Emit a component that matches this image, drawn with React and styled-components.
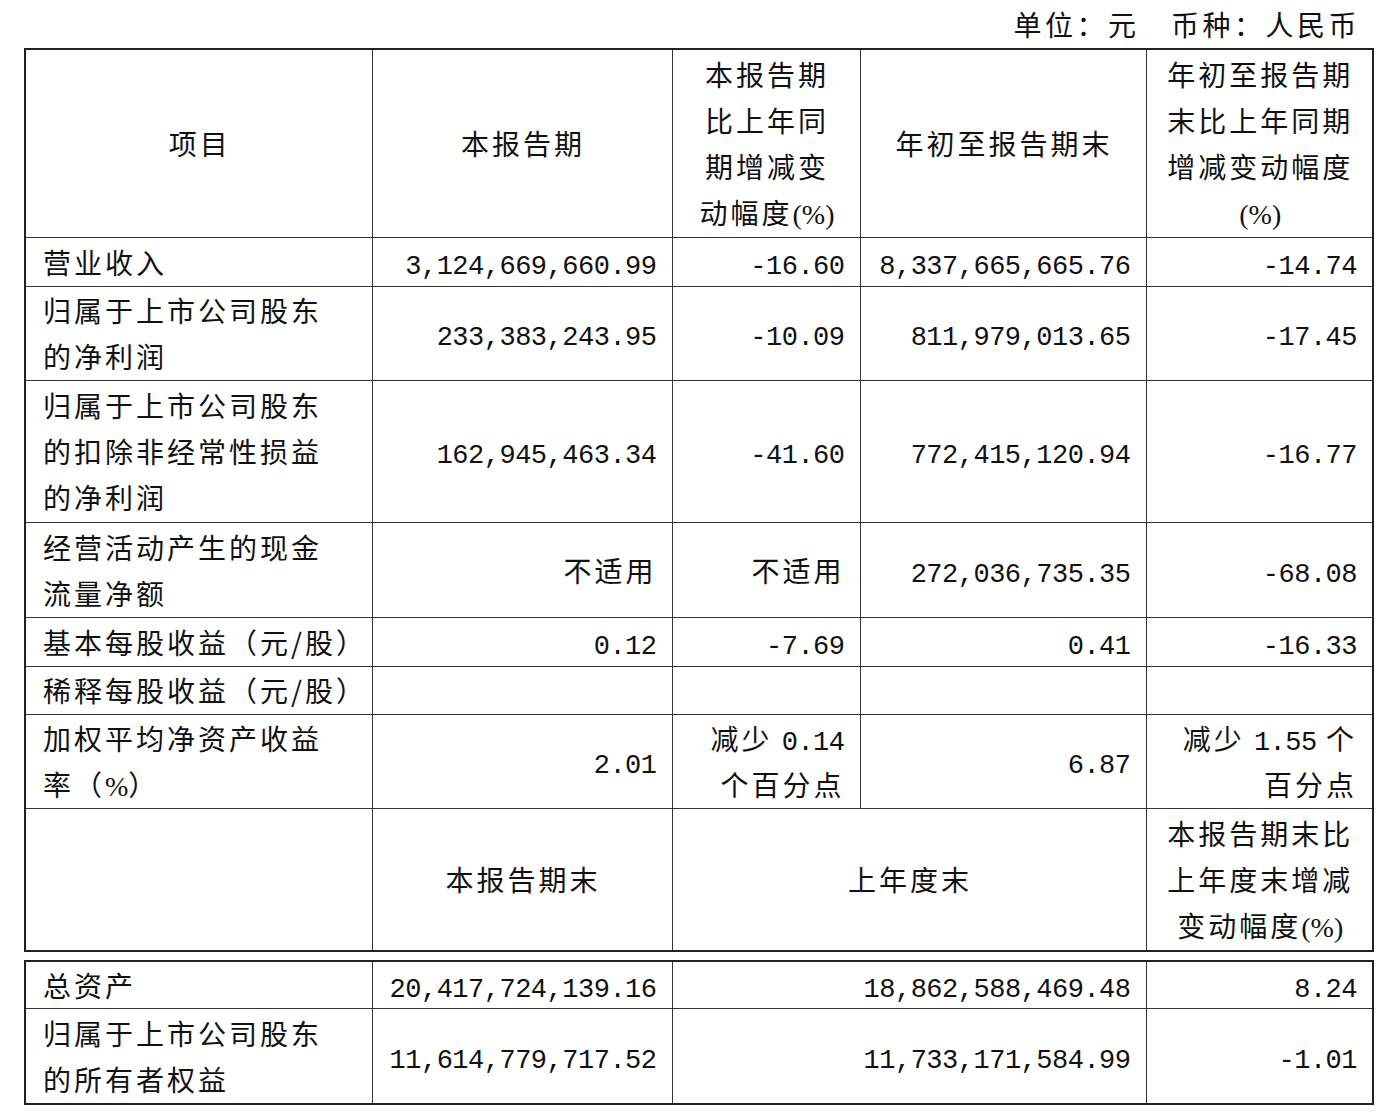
import React from 'react';
import styled, { createGlobalStyle } from 'styled-components';

const GlobalStyle = createGlobalStyle`
  html, body {
    margin: 0;
    padding: 0;
    background: #fff;
  }
  body {
    font-family: "Noto Sans CJK SC", "Liberation Serif", serif;
    color: #111;
  }
`;

const Page = styled.div`
  width: 1348px;
  padding: 0 10px 0 24px;
`;

const UnitLine = styled.div`
  height: 48px;
  line-height: 48px;
  text-align: right;
  padding-right: 12px;
  font-size: 28px;
  letter-spacing: 3.5px;
  white-space: pre;
`;

const Table = styled.table`
  width: 1348px;
  table-layout: fixed;
  border-collapse: collapse;
  border: 2px solid #222;
  margin-top: ${(p) => p.$gap || 0}px;
  font-size: 28px;
  letter-spacing: 3px;
`;

const Cell = styled.td`
  border: 1px solid #333;
  padding: 0 15px 0 17px;
  line-height: 46px;
  vertical-align: middle;
  text-align: ${(p) => p.$align || 'left'};
  height: ${(p) => (p.$h ? `${p.$h}px` : 'auto')};
  box-sizing: border-box;
  white-space: nowrap;
`;

const Num = styled.span`
  font-family: "Liberation Mono", monospace;
  font-size: 27px;
  line-height: 1;
  letter-spacing: -0.5px;
`;

const Pct = styled.span`
  font-family: "Liberation Serif", serif;
  line-height: 1;
  letter-spacing: 0;
`;

const cols = [347, 300, 188, 286, 227];

const Cols = () => (
  <colgroup>
    {cols.map((w, i) => (
      <col key={i} style={{ width: w }} />
    ))}
  </colgroup>
);

const Lines = ({ lines }) =>
  lines.map((l, i) => (
    <React.Fragment key={i}>
      {i > 0 && <br />}
      {l}
    </React.Fragment>
  ));

const rows = [
  { label: ['营业收入'], h: 49, v: ['3,124,669,660.99', '-16.60', '8,337,665,665.76', '-14.74'] },
  { label: ['归属于上市公司股东', '的净利润'], h: 94, v: ['233,383,243.95', '-10.09', '811,979,013.65', '-17.45'] },
  { label: ['归属于上市公司股东', '的扣除非经常性损益', '的净利润'], h: 142, v: ['162,945,463.34', '-41.60', '772,415,120.94', '-16.77'] },
  { label: ['经营活动产生的现金', '流量净额'], h: 95, v: ['不适用', '不适用', '272,036,735.35', '-68.08'] },
  { label: ['基本每股收益（元/股）'], h: 49, v: ['0.12', '-7.69', '0.41', '-16.33'] },
  { label: ['稀释每股收益（元/股）'], h: 48, v: ['', '', '', ''] },
];

const isNum = (s) => /^[-\d.,]+$/.test(s);

const Value = ({ s }) => (isNum(s) ? <Num>{s}</Num> : s);

export default function App() {
  return (
    <Page>
      <GlobalStyle />
      <UnitLine>单位：元　币种：人民币</UnitLine>
      <Table>
        <Cols />
        <tbody>
          <tr>
            <Cell $align="center" $h={188}>项目</Cell>
            <Cell $align="center">本报告期</Cell>
            <Cell $align="center">
              本报告期<br />比上年同<br />期增减变<br />动幅度<Pct>(%)</Pct>
            </Cell>
            <Cell $align="center">年初至报告期末</Cell>
            <Cell $align="center">
              年初至报告期<br />末比上年同期<br />增减变动幅度<br /><Pct>(%)</Pct>
            </Cell>
          </tr>
          {rows.map((r, i) => (
            <tr key={i}>
              <Cell $h={r.h}>
                <Lines lines={r.label} />
              </Cell>
              {r.v.map((s, j) => (
                <Cell key={j} $align="right">
                  <Value s={s} />
                </Cell>
              ))}
            </tr>
          ))}
          <tr>
            <Cell $h={94}>
              加权平均净资产收益<br />率（<Pct>%</Pct>）
            </Cell>
            <Cell $align="right"><Num>2.01</Num></Cell>
            <Cell $align="right">
              减少 <Num>0.14</Num>
              <br />
              个百分点
            </Cell>
            <Cell $align="right"><Num>6.87</Num></Cell>
            <Cell $align="right">
              减少 <Num>1.55</Num> 个
              <br />
              百分点
            </Cell>
          </tr>
          <tr>
            <Cell $h={143} />
            <Cell $align="center">本报告期末</Cell>
            <Cell $align="center" colSpan={2}>上年度末</Cell>
            <Cell $align="center">
              本报告期末比<br />上年度末增减<br />变动幅度<Pct>(%)</Pct>
            </Cell>
          </tr>
        </tbody>
      </Table>
      <Table $gap={8}>
        <Cols />
        <tbody>
          <tr>
            <Cell $h={47}>总资产</Cell>
            <Cell $align="right"><Num>20,417,724,139.16</Num></Cell>
            <Cell $align="right" colSpan={2}><Num>18,862,588,469.48</Num></Cell>
            <Cell $align="right"><Num>8.24</Num></Cell>
          </tr>
          <tr>
            <Cell $h={95}>
              <Lines lines={['归属于上市公司股东', '的所有者权益']} />
            </Cell>
            <Cell $align="right"><Num>11,614,779,717.52</Num></Cell>
            <Cell $align="right" colSpan={2}><Num>11,733,171,584.99</Num></Cell>
            <Cell $align="right"><Num>-1.01</Num></Cell>
          </tr>
        </tbody>
      </Table>
    </Page>
  );
}
